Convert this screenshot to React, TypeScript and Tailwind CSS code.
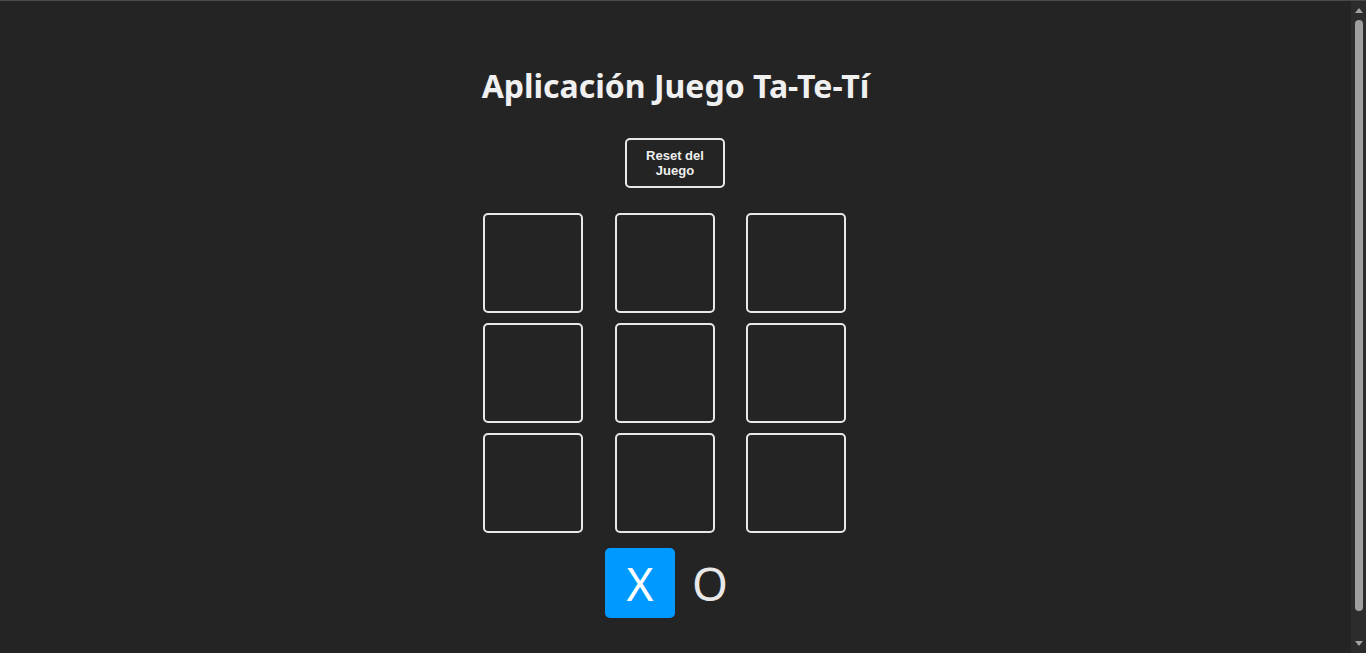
import { useState } from 'react';

function Scrollbar() {
  // fake dark scrollbar, as in the screenshot
  return (
    <div className="w-[15px] shrink-0 bg-[#2c2c2c] flex flex-col items-center">
      <div className="mt-[7px] w-0 h-0 border-l-[4px] border-r-[4px] border-b-[5px] border-l-transparent border-r-transparent border-b-[#a3a3a3]" />
      <div className="mt-[7px] w-[8px] h-[591px] rounded-full bg-[#9f9f9f]" />
      <div className="mt-[30px] w-0 h-0 border-l-[4px] border-r-[4px] border-t-[5px] border-l-transparent border-r-transparent border-t-[#a3a3a3]" />
    </div>
  );
}

export default function App() {
  const [board, setBoard] = useState<(string | null)[]>(Array(9).fill(null));
  const [turn, setTurn] = useState<'X' | 'O'>('X');

  const play = (i: number) => {
    if (board[i]) return;
    const next = [...board];
    next[i] = turn;
    setBoard(next);
    setTurn(turn === 'X' ? 'O' : 'X');
  };

  const reset = () => {
    setBoard(Array(9).fill(null));
    setTurn('X');
  };

  return (
    <div className="h-screen overflow-hidden flex bg-[#242424] border-t border-[#4a4a4a] text-[#f0f0f0]">
      <div className="flex-1 flex flex-col items-center pt-[59px]">
        <h1 className="font-['Noto_Sans',sans-serif] font-bold text-[32px] leading-[52px]">
          Aplicación Juego Ta-Te-Tí
        </h1>

        <button
          onClick={reset}
          className="mt-[26px] mr-[1px] w-[100px] h-[50px] border-2 border-[#e8e8e8] rounded-[5px] font-['Liberation_Sans',Arial,sans-serif] font-bold text-[13px] leading-[15px] px-3"
        >
          Reset del Juego
        </button>

        <div className="w-[386px] mt-[25px]">
          <div className="grid grid-cols-[132px_131px_100px] gap-y-[10px]">
            {board.map((v, i) => (
              <button
                key={i}
                onClick={() => play(i)}
                className="w-[100px] h-[100px] border-2 border-[#e8e8e8] rounded-[5px] font-['Noto_Sans',sans-serif] text-[48px]"
              >
                {v}
              </button>
            ))}
          </div>
        </div>

        <div className="flex mt-[15px] mr-[1px]">
          {(['X', 'O'] as const).map((p) => (
            <div
              key={p}
              className={`w-[70px] h-[70px] rounded-[5px] flex items-center justify-center font-['Noto_Sans',sans-serif] text-[46px] ${
                turn === p ? 'bg-[#0099ff] text-white' : 'text-[#e8e8e8]'
              }`}
            >
              {p}
            </div>
          ))}
        </div>
      </div>
      <Scrollbar />
    </div>
  );
}
